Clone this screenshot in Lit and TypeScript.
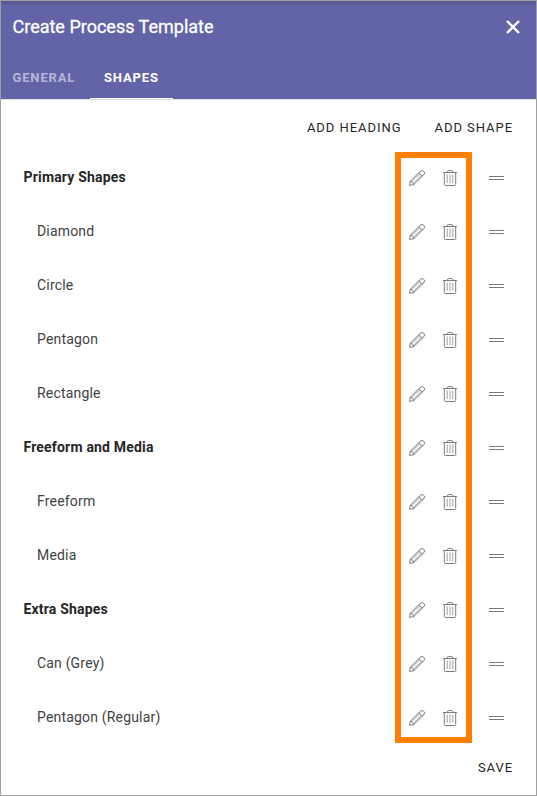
import { LitElement, html, css } from "lit";
import { customElement, state } from "lit/decorators.js";
import { classMap } from "lit/directives/class-map.js";

interface Row {
  name: string;
  heading?: boolean;
}

const ROWS: Row[] = [
  { name: "Primary Shapes", heading: true },
  { name: "Diamond" },
  { name: "Circle" },
  { name: "Pentagon" },
  { name: "Rectangle" },
  { name: "Freeform and Media", heading: true },
  { name: "Freeform" },
  { name: "Media" },
  { name: "Extra Shapes", heading: true },
  { name: "Can (Grey)" },
  { name: "Pentagon (Regular)" },
];

const pencilIcon = html`<svg class="icon" width="18" height="18" viewBox="0 0 18 18">
  <path d="M1.5 16.4 L2.3 12.1 L12.5 2.1 Q14.2 0.8 15.8 2.3 Q17.3 3.9 16 5.6 L5.8 15.6 Z" />
  <path d="M2.3 12.1 L3.8 12.5 L4.2 13.8 L5.5 14.2 L5.8 15.6 M11.3 3.3 Q11.5 6.6 14.8 6.8" />
  <path class="fine" d="M3.8 12.5 L11.6 4.8 M5.5 14.2 L13.3 6.5" />
</svg>`;

const trashIcon = html`<svg class="icon" width="14" height="18" viewBox="0 0 14 18">
  <path d="M0 3.5 H14 M4 3.3 Q4.3 1.5 5.8 1.5 H8.2 Q9.7 1.5 10 3.3" />
  <path d="M1.3 3.5 V15.5 Q1.3 16.5 2.3 16.5 H11.7 Q12.7 16.5 12.7 15.5 V3.5" />
  <path class="fine" d="M4.2 5.5 V14 M7 5.5 V14 M9.8 5.5 V14" />
</svg>`;

@customElement("app-root")
export class AppRoot extends LitElement {
  @state() private tab = "Shapes";

  static styles = css`
    :host {
      display: flex;
      flex-direction: column;
      box-sizing: border-box;
      width: 537px;
      height: 796px;
      border: 1px solid #a0a0a0;
      background: #fff;
      color: #262626;
      font-family: Roboto, sans-serif;
      overflow: hidden;
    }
    button {
      border: 0;
      padding: 0;
      margin: 0;
      background: none;
      color: inherit;
      font: inherit;
    }
    header {
      flex: none;
      height: 99px;
      box-sizing: border-box;
      background: linear-gradient(#56568f, #6264a7 5px);
      border-bottom: 1px solid #e1e1e6;
      color: #fff;
    }
    .title {
      display: flex;
      align-items: center;
      justify-content: space-between;
      height: 52px;
      padding: 0 16px 0 11.5px;
    }
    h1 {
      margin: 0;
      font-size: 18px;
      font-weight: 400;
      line-height: 24px;
      -webkit-text-stroke: 0.3px #fff;
    }
    .close {
      display: block;
      fill: none;
      stroke: #fff;
      stroke-width: 2.4;
    }
    .tabs {
      display: flex;
      height: 46px;
    }
    .tab {
      box-sizing: border-box;
      height: 46px;
      padding-top: 4px;
      border-bottom: 1px solid transparent;
      font-size: 13px;
      line-height: 15px;
      font-weight: 700;
      letter-spacing: 0.85px;
      text-transform: uppercase;
      color: #b5b5d7;
      width: 89px;
      text-align: left;
      padding-left: 11.5px;
    }
    .tab.active {
      width: 83px;
      padding-left: 14px;
      color: #fff;
      border-bottom-color: #fff;
    }
    .actions {
      display: flex;
      flex: none;
      justify-content: flex-end;
      align-items: center;
      gap: 33px;
      height: 50px;
      padding: 4px 23px 0 0;
      box-sizing: border-box;
      font-size: 13px;
      letter-spacing: 0.95px;
      text-transform: uppercase;
    }
    .list {
      position: relative;
      flex: none;
    }
    .highlight {
      position: absolute;
      top: 2px;
      left: 394px;
      width: 77px;
      height: 591px;
      box-sizing: border-box;
      border: 6px solid #ff8000;
      pointer-events: none;
    }
    .row {
      display: flex;
      align-items: center;
      height: 54px;
      box-sizing: border-box;
      padding: 0 32px 0 36px;
    }
    .name {
      flex: 1;
      font-size: 14px;
      line-height: 20px;
      letter-spacing: 0.18px;
      color: #424242;
    }
    .row.heading {
      padding-left: 22.5px;
    }
    .heading .name {
      font-weight: 700;
      color: #262626;
    }
    .icon {
      display: block;
      flex: none;
      margin-top: 2px;
      fill: none;
      stroke: #7c7c7c;
      stroke-width: 1;
    }
    .fine {
      stroke: #a0a0a0;
    }
    .pencil {
      margin-right: 17px;
    }
    .trash {
      margin-right: 32px;
    }
    .grip {
      width: 15px;
      height: 4px;
      margin-top: 2px;
      box-sizing: border-box;
      border: solid #777;
      border-width: 1px 0;
    }
    .footer {
      height: 43px;
    }
  `;

  render() {
    return html`
      <header>
        <div class="title">
          <h1>Create Process Template</h1>
          <svg class="close" width="14" height="14" viewBox="0 0 14 14">
            <path d="M1 1 L13 13 M13 1 L1 13" />
          </svg>
        </div>
        <nav class="tabs">
          ${["General", "Shapes"].map(
            (t) => html`<button
              class=${classMap({ tab: true, active: t === this.tab })}
              @click=${() => (this.tab = t)}
            >${t}</button>`
          )}
        </nav>
      </header>
      <div class="actions">
        <span>Add heading</span>
        <span>Add shape</span>
      </div>
      <div class="list">
        ${ROWS.map(
          (r) => html`<div class=${classMap({ row: true, heading: !!r.heading })}>
            <span class="name">${r.name}</span>
            <button class="pencil" aria-label="Edit">${pencilIcon}</button>
            <button class="trash" aria-label="Delete">${trashIcon}</button>
            <span class="grip"></span>
          </div>`
        )}
        <div class="highlight"></div>
      </div>
      <div class="actions footer"><span>Save</span></div>
    `;
  }
}
